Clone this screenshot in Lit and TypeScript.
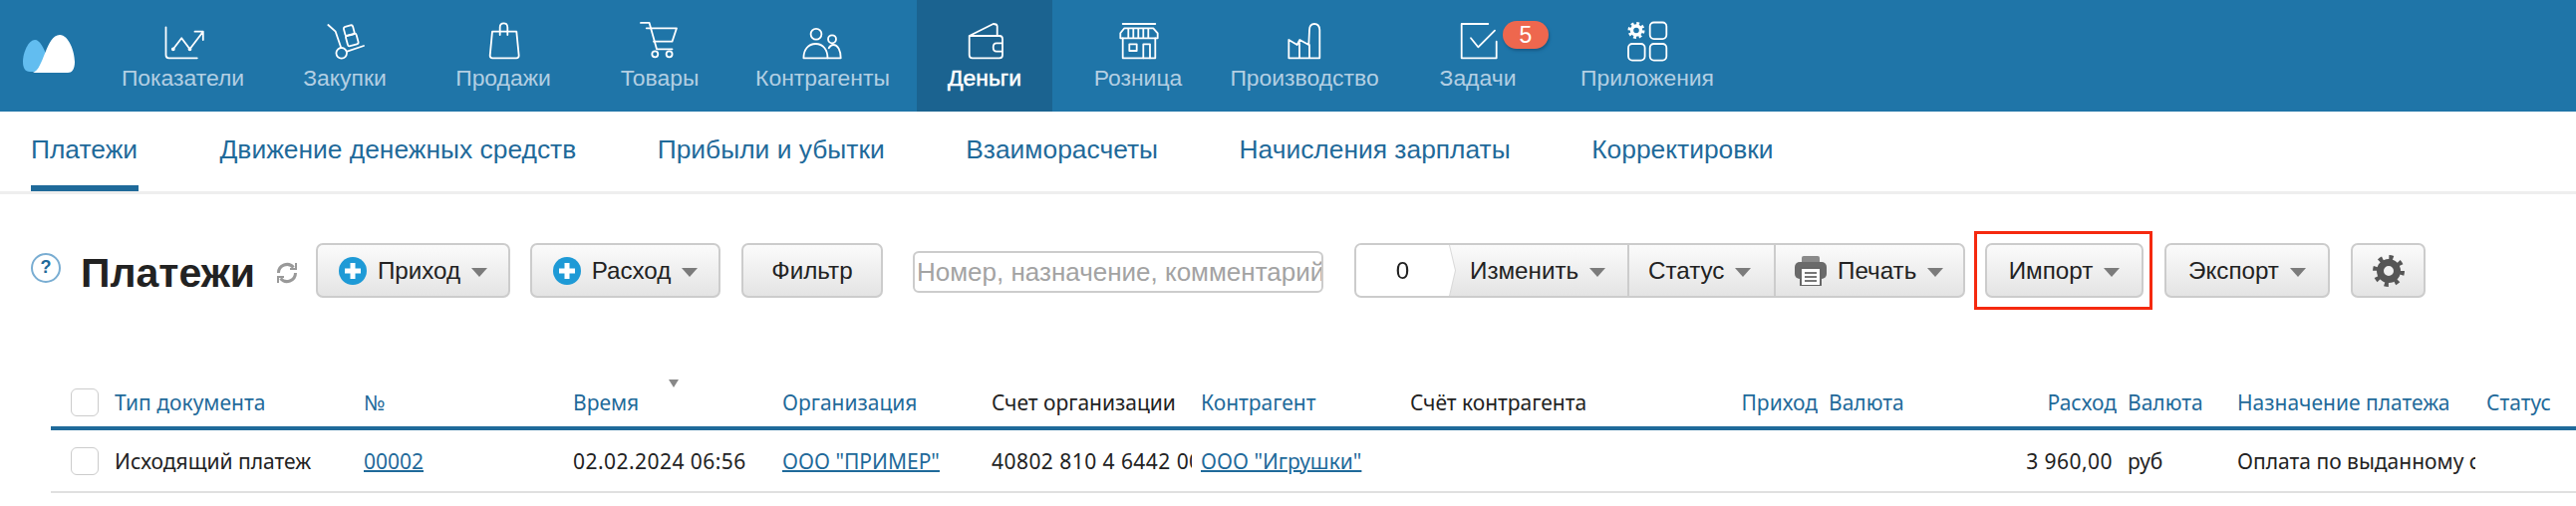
import { LitElement, html, css, svg } from "lit";
import { customElement } from "lit/decorators.js";

const ico = (inner: unknown) =>
  html`<svg class="ico" width="48" height="40" viewBox="0 0 48 40" fill="none" stroke="#fff" stroke-width="1.8" stroke-linecap="round" stroke-linejoin="round">${inner}</svg>`;

type Nav = { t: string; w: number; i: unknown; on?: boolean; badge?: string };

const NAV: Nav[] = [
  { t: "Показатели", w: 183, i: svg`<path d="M6.5 5.3V33.3q0 3 3 3H37.8"/><path d="M13.8 27.3L22.2 16.3L30.5 27.3L43.8 9.7M35.5 9.7H43.8V18"/><circle cx="13.8" cy="27.3" r="1" fill="#fff"/><circle cx="30.5" cy="27.3" r="1" fill="#fff"/>` },
  { t: "Закупки", w: 142, i: svg`<path d="M7.3 3L14.7 9.7L20.3 26"/><circle cx="20.7" cy="31.3" r="5.3"/><path d="M26.3 29.7L43 24"/><rect x="23.5" y="4" width="9.5" height="9.5" rx="2" transform="rotate(-15 28 8.7)"/><rect x="25.8" y="12.5" width="11" height="11" rx="2" transform="rotate(-15 31.3 18)"/>` },
  { t: "Продажи", w: 176, i: svg`<path d="M13 9.7H37.3L39.7 33.8q0 2.5-2.5 2.5H13.2q-2.5 0-2.5-2.5Z"/><path d="M20.7 13V5.5q0-4.2 3.8-4.2t3.8 4.2V13"/>` },
  { t: "Товары", w: 138, i: svg`<path d="M5 .9H13.6L21 27.3H36.5"/><path d="M10.7 6.3H41L36.5 19.7H18"/><circle cx="19.3" cy="32.3" r="3"/><circle cx="33.6" cy="32.3" r="3"/>` },
  { t: "Контрагенты", w: 189, i: svg`<circle cx="17" cy="12.3" r="5.4"/><circle cx="33" cy="17.3" r="4"/><path d="M4.4 36.3C4.4 28 9 22 16.5 22S28.5 28 28.5 36.3Z"/><path d="M29.7 26.3C31 24 32.5 23 34 23C39 23 41.7 29 41.7 36.3H28.5"/>` },
  { t: "Деньги", w: 136, on: true, i: svg`<path d="M8.7 14H39q3 0 3 3V33.3q0 3-3 3H11.7q-3 0-3-3ZM8.7 14L32.7 2q4 0 4 2.5V14M42 21.3H36q-3.3 0-3.3 4.2T36 29.7H42"/>` },
  { t: "Розница", w: 172, i: svg`<path d="M8.7 2H41.3M10.3 6.3H39.3L43.7 11.3V16.3H6.3V11.3ZM14.3 6.3V16.3M19.3 6.3V16.3M24.3 6.3V16.3M29.3 6.3V16.3M34.3 6.3V16.3"/><path d="M8.7 16.3V36.3H41.3V16.3"/><rect x="15.3" y="22.3" width="7.4" height="6.7"/><path d="M29.3 36.3V22.3H36V36.3"/>` },
  { t: "Производство", w: 162, i: svg`<path d="M8.3 36.3V18L16.7 23L19.3 18L28.3 23L29 8Q29 2 34 2T39.3 8V36.3ZM19 21V36.3M29 23V36.3"/>` },
  { t: "Задачи", w: 186, badge: "5", i: svg`<path d="M34.3 2H7.7V36.3H42.7V19.7"/><path d="M17 16.3L24.3 25.3L41 8.7"/>` },
  { t: "Приложения", w: 154, i: svg`<rect x="26.7" y=".5" width="16.6" height="16.6" rx="4"/><rect x="5" y="22" width="16.6" height="16.6" rx="4"/><rect x="26.7" y="22" width="16.6" height="16.6" rx="4"/><circle cx="13" cy="8.5" r="4.5" stroke-width="3.4"/><circle cx="13" cy="8.5" r="7" stroke-width="3" stroke-linecap="butt" stroke-dasharray="2.8 2.7"/>` },
];

@customElement("app-root")
export class AppRoot extends LitElement {
  static styles = css`
    :host { display: block; width: 2585px; height: 508px; overflow: hidden; background: #fff; font-family: "Liberation Sans", Arial, sans-serif; color: #222; }
    * { box-sizing: border-box; }
    .top { height: 112px; background: #1f75a8; display: flex; }
    .logo { width: 92px; padding: 34px 0 0 22px; }
    .logo svg { display: block; }
    .nav { padding-top: 22px; display: flex; flex-direction: column; align-items: center; color: #b3cfe3; font-size: 22.9px; line-height: 27px; position: relative; white-space: nowrap; }
    .nav .ico { display: block; margin-bottom: 3px; overflow: visible; }
    .nav.on { background: #1b6390; color: #fff; -webkit-text-stroke: 0.5px #fff; }
    .badge { position: absolute; left: 118px; top: 21px; width: 46px; height: 28px; border-radius: 14px; background: #ee674e; color: #fff; font-size: 23px; display: flex; align-items: center; justify-content: center; box-shadow: 1px 2px 3px #175a85; }
    .tabs { height: 83px; border-bottom: 3px solid #eee; display: flex; padding-left: 31px; gap: 81.5px; }
    .tab { height: 80px; line-height: 76px; font-size: 26.4px; color: #1f6a9a; white-space: nowrap; }
    .tab.on { border-bottom: 6px solid #1f6a9a; min-width: 108px; }
    .bar { height: 55px; margin-top: 49px; display: flex; align-items: center; position: relative; }
    .bar > * { flex: none; }
    .help { width: 30px; height: 30px; margin: 0 0 6px 31px; border: 2px solid #79add2; border-radius: 50%; color: #1f6a9a; font-size: 18px; font-weight: 700; display: flex; align-items: center; justify-content: center; }
    h1 { margin: 4px 0 0 20px; width: 174px; font-size: 41px; font-weight: 700; color: #222; line-height: 50px; white-space: nowrap; }
    .rf { margin: 5px 18px 0 22px; display: block; }
    .btn { height: 55px; border: 2px solid #ccc; border-radius: 7px; background: linear-gradient(#fbfbfb, #e4e4e4); font-size: 24.2px; color: #222; display: flex; align-items: center; justify-content: center; gap: 11px; }
    .in { width: 195px; margin-right: 20px; }
    .out { width: 191px; margin-right: 21px; }
    .flt { width: 142px; margin-right: 30px; }
    .imp { width: 159px; margin-left: 20px; }
    .exp { width: 166px; margin-left: 21px; }
    .gr { width: 75px; margin-left: 21px; }
    .arr { width: 0; height: 0; border: 8px solid transparent; border-top: 9px solid #7b7b7b; border-bottom: 0; margin-top: 3px; }
    .plus { width: 28px; height: 28px; }
    .search { width: 412px; height: 42px; margin: 3px 31px 0 0; border: 2px solid #ccc; border-radius: 6px; color: #a3a3a3; font-size: 26px; line-height: 38px; padding: 0 3px 0 2px; white-space: nowrap; overflow: hidden; }
    .group { display: flex; width: 613px; height: 55px; border: 2px solid #ccc; border-radius: 7px; overflow: hidden; background: linear-gradient(#fbfbfb, #e4e4e4); font-size: 24.2px; }
    .zw { flex: none; width: 99px; filter: drop-shadow(1px 0 0 #d8d8d8); }
    .zero { width: 99px; height: 100%; padding-right: 6px; background: #fff; display: flex; align-items: center; justify-content: center; clip-path: polygon(0 0, 93px 0, 99px 50%, 93px 100%, 0 100%); }
    .g { flex: none; height: 100%; display: flex; align-items: center; gap: 11px; padding-left: 19px; border-left: 2px solid #ccc; }
    .g1 { width: 173px; border-left: 0; padding-left: 15px; }
    .g2 { width: 147px; }
    .g3 { width: 190px; }
    .red { position: absolute; left: 1981px; top: -12px; width: 179px; height: 79px; border: 3px solid #f5290f; }
    .tr { margin-left: 51px; display: grid; grid-template-columns: 64px 250px 210px 210px 210px 210px 210px 185px 235px 115px 185px 110px 250px 90px; font-family: "Noto Sans", sans-serif; font-size: 21px; align-items: center; position: relative; }
    .hd { height: 52px; margin-top: 81px; border-bottom: 4px solid #1f6a9a; }
    .rw { height: 63px; border-bottom: 2px solid #e0e0e0; }
    .c { white-space: nowrap; overflow: hidden; line-height: 30px; }
    .nm { letter-spacing: 0.45px; }
    .lnk { color: #1f6a9a; }
    a.lnk { text-decoration: underline; text-decoration-thickness: 2px; }
    .rt { text-align: right; margin-right: 11px; }
    .rm { text-align: right; margin-right: 15px; }
    .cl { margin-right: 9px; }
    .cn { margin-right: 11px; }
    .chk { display: block; margin-left: 20px; width: 28px; height: 28px; border: 1.5px solid #ccc; border-radius: 6px; background: #fff; }
    .sort { position: absolute; left: 620px; top: 1px; width: 0; height: 0; border: 5px solid transparent; border-top: 8px solid #888; border-bottom: 0; }
  `;

  private arr() { return html`<span class="arr"></span>`; }
  private plus() {
    return html`<svg class="plus" viewBox="0 0 28 28"><circle cx="14" cy="14" r="14" fill="#1e9ad6"/><path d="M14 6V22M6 14H22" stroke="#fff" stroke-width="5"/></svg>`;
  }

  render() {
    return html`
      <div class="top">
        <div class="logo">
          <svg width="54" height="40" viewBox="0 0 54 40">
            <path d="M1 28C1 18 7 6 13 6C18 6 22 14 25 23L20 32L14 38L8 38C3 38 1 34 1 28Z" fill="#62bdf0"/>
            <path d="M11 39C22 36 24 1 38 1C47 1 53 18 53 28C53 36 50 39 46 39Z" fill="#fff"/>
          </svg>
        </div>
        ${NAV.map((n) => html`<div class="nav ${n.on ? "on" : ""}" style="width:${n.w}px">${ico(n.i)}<span>${n.t}</span>${n.badge ? html`<span class="badge">${n.badge}</span>` : ""}</div>`)}
      </div>
      <div class="tabs">
        <div class="tab on">Платежи</div>
        <div class="tab">Движение денежных средств</div>
        <div class="tab">Прибыли и убытки</div>
        <div class="tab">Взаиморасчеты</div>
        <div class="tab">Начисления зарплаты</div>
        <div class="tab">Корректировки</div>
      </div>
      <div class="bar">
        <div class="help">?</div>
        <h1>Платежи</h1>
        <svg class="rf" width="22" height="22" viewBox="0 0 22 22" fill="none" stroke="#999" stroke-width="3"><path d="M2.5 11A8.5 8.5 0 0 1 17.5 5.5M19.5 11A8.5 8.5 0 0 1 4.5 16.5"/><path d="M20 1V7H14M2 21V15H8" stroke-width="2"/></svg>
        <div class="btn in">${this.plus()}<span>Приход</span>${this.arr()}</div>
        <div class="btn out">${this.plus()}<span>Расход</span>${this.arr()}</div>
        <div class="btn flt">Фильтр</div>
        <div class="search">Номер, назначение, комментарий</div>
        <div class="group">
          <div class="zw"><div class="zero">0</div></div>
          <div class="g g1">Изменить${this.arr()}</div>
          <div class="g g2">Статус${this.arr()}</div>
          <div class="g g3">
            <svg width="32" height="30" viewBox="0 0 32 30"><rect x="7" y="0" width="18" height="8" rx="2" fill="#8a8a8a"/><rect x="0" y="6" width="32" height="17" rx="5" fill="#6a6a6a"/><rect x="6" y="12" width="20" height="18" rx="1" fill="#fff" stroke="#666" stroke-width="2"/><path d="M10 17H22M10 21H22M10 25H22" stroke="#777" stroke-width="2"/></svg>
            Печать${this.arr()}</div>
        </div>
        <div class="btn imp">Импорт${this.arr()}</div>
        <div class="btn exp">Экспорт${this.arr()}</div>
        <div class="btn gr">
          <svg width="32" height="32" viewBox="0 0 32 32"><circle cx="16" cy="16" r="8.5" fill="none" stroke="#555" stroke-width="7"/><circle cx="16" cy="16" r="13" fill="none" stroke="#555" stroke-width="6" stroke-dasharray="4 6.2"/></svg>
        </div>
        <div class="red"></div>
      </div>
      <div class="tr hd">
        <span class="chk"></span>
        <span class="c lnk">Тип документа</span>
        <span class="c lnk">№</span>
        <span class="c lnk">Время</span>
        <span class="c lnk">Организация</span>
        <span class="c">Счет организации</span>
        <span class="c lnk">Контрагент</span>
        <span class="c">Счёт контрагента</span>
        <span class="c lnk rt">Приход</span>
        <span class="c lnk">Валюта</span>
        <span class="c lnk rt">Расход</span>
        <span class="c lnk">Валюта</span>
        <span class="c lnk">Назначение платежа</span>
        <span class="c lnk">Статус</span>
        <span class="sort"></span>
      </div>
      <div class="tr rw">
        <span class="chk"></span>
        <span class="c">Исходящий платеж</span>
        <span class="c"><a class="lnk">00002</a></span>
        <span class="c nm">02.02.2024 06:56</span>
        <span class="c"><a class="lnk">ООО "ПРИМЕР"</a></span>
        <span class="c cl nm">40802 810 4 6442 0000 1</span>
        <span class="c"><a class="lnk">ООО "Игрушки"</a></span>
        <span class="c"></span>
        <span class="c rt"></span>
        <span class="c"></span>
        <span class="c rm nm">3 960,00</span>
        <span class="c">руб</span>
        <span class="c cn">Оплата по выданному счету</span>
        <span class="c"></span>
      </div>
    `;
  }
}
